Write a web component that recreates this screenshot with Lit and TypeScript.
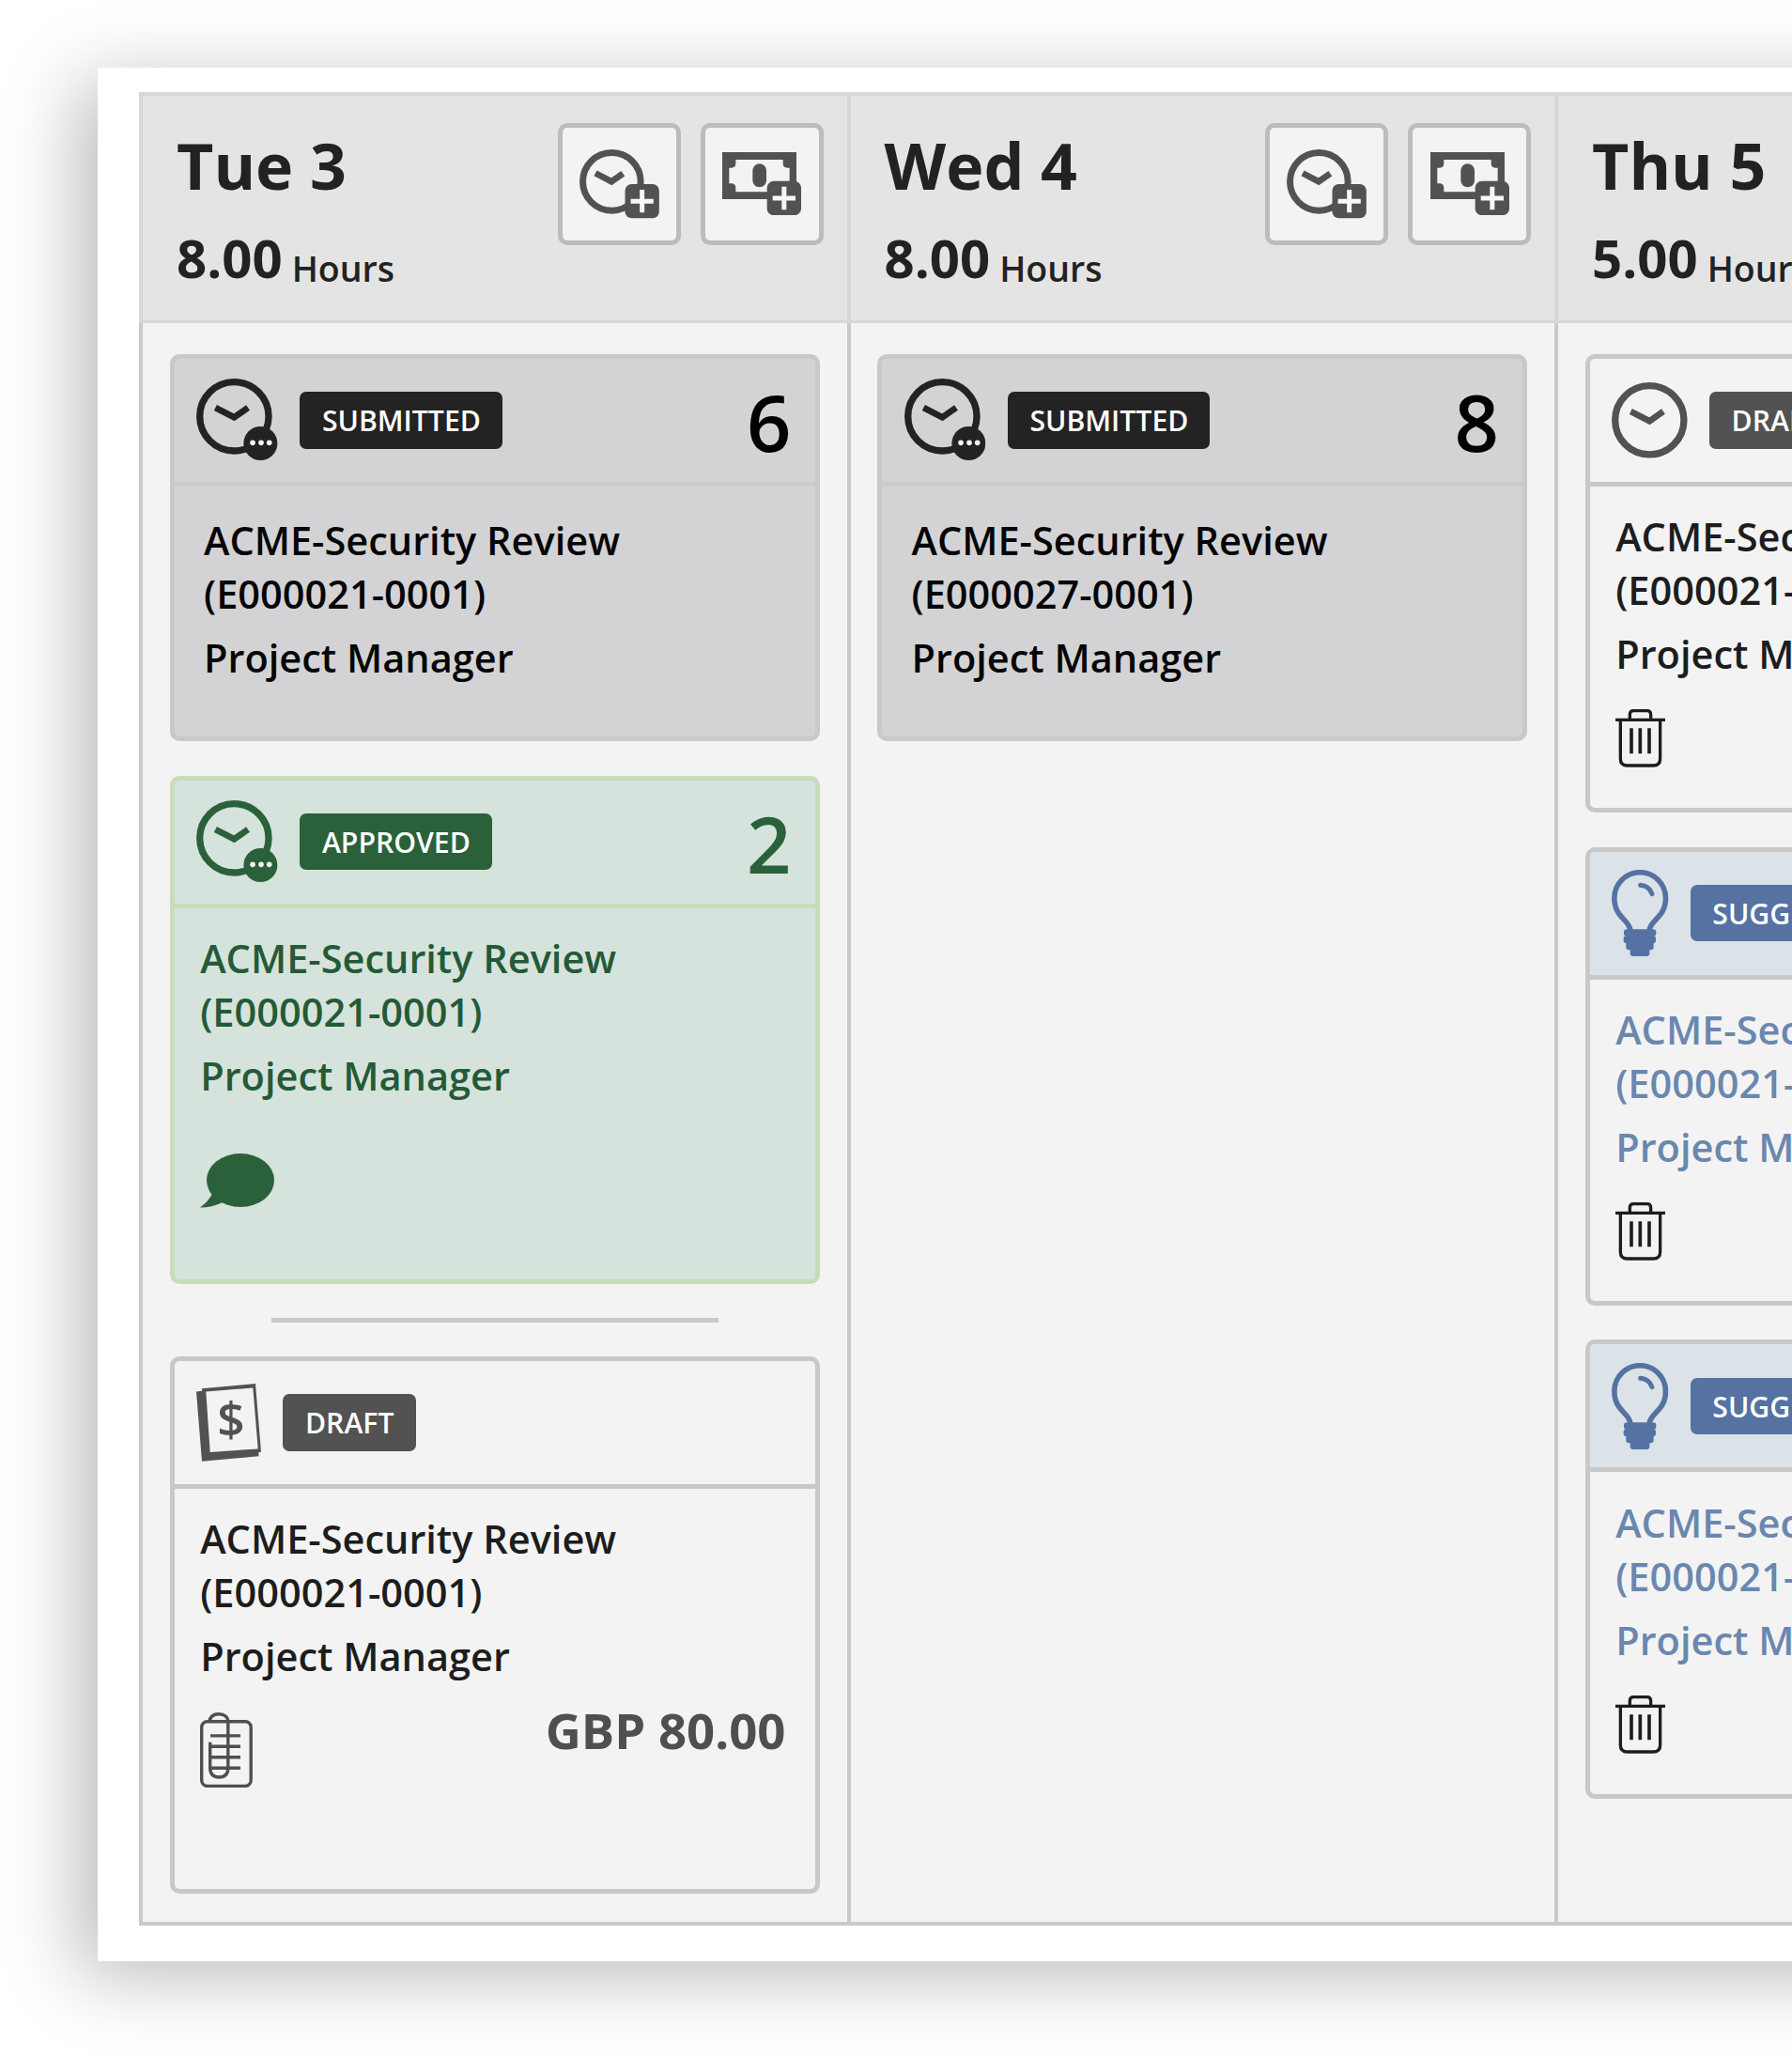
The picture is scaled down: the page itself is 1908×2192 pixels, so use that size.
import { LitElement, html, css, svg, nothing } from "lit";
import { customElement, property } from "lit/decorators.js";

type Status = "submitted" | "approved" | "draft" | "suggested";

interface Entry {
  status: Status;
  kind: "time" | "expense" | "suggestion";
  hours?: string;
  code: string;
  footer?: "comment" | "attachment" | "trash";
  amount?: string;
}

interface Day {
  name: string;
  total: string;
  time: Entry[];
  expenses: Entry[];
}

const DAYS: Day[] = [
  {
    name: "Tue 3",
    total: "8.00",
    time: [
      { status: "submitted", kind: "time", hours: "6", code: "E000021-0001" },
      { status: "approved", kind: "time", hours: "2", code: "E000021-0001", footer: "comment" },
    ],
    expenses: [
      { status: "draft", kind: "expense", code: "E000021-0001", footer: "attachment", amount: "GBP 80.00" },
    ],
  },
  {
    name: "Wed 4",
    total: "8.00",
    time: [{ status: "submitted", kind: "time", hours: "8", code: "E000027-0001" }],
    expenses: [],
  },
  {
    name: "Thu 5",
    total: "5.00",
    time: [
      { status: "draft", kind: "time", code: "E000021-0001", footer: "trash" },
      { status: "suggested", kind: "suggestion", code: "E000021-0001", footer: "trash" },
      { status: "suggested", kind: "suggestion", code: "E000021-0001", footer: "trash" },
    ],
    expenses: [],
  },
];

const plusBadge = (x: number, y: number) => svg`
  <rect x=${x} y=${y} width="109" height="109" rx="21" fill="#525252" />
  <path d="M${x + 18} ${y + 54.5}h73M${x + 54.5} ${y + 18}v73" stroke="#f7f7f7" stroke-width="15" fill="none" />`;

const addTimeIcon = html`<svg width="85" height="73.3" viewBox="171 207 255 220">
  <circle cx="274" cy="310" r="92.5" fill="none" stroke="#525252" stroke-width="21" />
  <path d="M222 283L273 310L310 284" fill="none" stroke="#525252" stroke-width="20" />
  ${plusBadge(316.5, 318)}
</svg>`;

const addExpenseIcon = html`<svg width="84" height="67" viewBox="628 216 252 201">
  <path fill="#525252" fill-rule="evenodd"
    d="M628 216H865V366H628ZM671 240V252Q671 266 657 266H650V316H657Q671 316 671 330V343H822V330Q822 316 836 316H843V266H836Q822 266 822 252V240Z" />
  <rect x="725" y="253" width="44" height="75" rx="22" fill="#525252" />
  ${plusBadge(771, 308.5)}
</svg>`;

const clockIcon = (pending: boolean) => html`<svg
  class=${pending ? "pending" : ""}
  width=${pending ? 86.4 : 80.6} height=${pending ? 87 : 80.6}
  viewBox=${pending ? "118 114 259 261" : "118 114 242 242"}>
  <circle cx="239" cy="235" r="110" fill="none" stroke="currentColor" stroke-width="22" />
  <path d="M179 207L239 238L283 207" fill="none" stroke="currentColor" stroke-width="20" />
  ${pending
    ? svg`<circle cx="323" cy="321" r="54" fill="currentColor" />
        <g fill="#f4f4f4"><circle cx="298" cy="319" r="8.5" /><circle cx="325" cy="319" r="8.5" /><circle cx="351" cy="319" r="8.5" /></g>`
    : nothing}
</svg>`;

const bulbIcon = html`<svg width="60.3" height="92" viewBox="230 1098 181 276">
  <path d="M290 1291C285 1256 238.500 1250 238.500 1188A82 82 0 0 1 402.500 1188C402.500 1250 355 1256 350 1291"
    fill="none" stroke="currentColor" stroke-width="17" />
  <path d="M322 1147Q350 1150 359 1175" fill="none" stroke="currentColor" stroke-width="15" stroke-linecap="round" />
  <g fill="currentColor">
    <rect x="269" y="1288" width="103" height="22" rx="9" />
    <rect x="268" y="1309" width="103" height="24" rx="9" />
    <rect x="276" y="1298" width="88" height="56" rx="9" />
    <rect x="289" y="1340" width="62" height="34" rx="9" />
  </g>
</svg>`;

const receiptIcon = html`<svg width="69" height="83" viewBox="0 0 69 83">
  <path fill="currentColor" fill-rule="evenodd"
    d="M6 5.300L63 0L69 72.700L66.300 73.200L66.500 77.300L6 82.800L0 8.600L6 7.800ZM10.300 8.600L14.700 73L65.700 69.400L60.300 4.500Z" />
  <text x="37" y="56" text-anchor="middle" font-family="Open Sans, sans-serif" font-weight="600" font-size="51.500" fill="currentColor">$</text>
</svg>`;

const commentIcon = html`<svg width="79" height="58" viewBox="0 0 79 58">
  <ellipse cx="43" cy="28.500" rx="36" ry="28.500" fill="currentColor" />
  <path d="M12.500 43.500Q9 51 0 57.500Q13 57.500 24 52L20 38Z" fill="currentColor" />
</svg>`;

const attachmentIcon = html`<svg width="56" height="80" viewBox="0 0 56 80" fill="none" stroke="currentColor" stroke-width="3.400">
  <rect x="1.700" y="9.800" width="52.500" height="68.600" rx="6" />
  <path d="M10 10C10.500 5 14 1.700 20 1.700S29.800 5 29.800 10V59Q29.800 69 20.300 69T10.700 59V31.800" />
  <path d="M11 24.900H43M11 36.300H43M11 47.800H43M11 59.200H43" />
</svg>`;

const trashIcon = html`<svg width="53.3" height="61.7" viewBox="242 585 160 185" fill="none" stroke="currentColor" stroke-width="10">
  <path d="M288 617V602Q288 590 300 590H343Q355 590 355 602V617" />
  <path d="M242 619H402" />
  <path d="M258 622V743Q258 765 280 765H363Q385 765 385 743V622" />
  <path stroke-width="11" d="M293 646V727M321 646V727M350 646V727" />
</svg>`;

@customElement("entry-card")
class EntryCard extends LitElement {
  @property({ attribute: false }) entry!: Entry;

  static styles = css`
    :host { display: block; }
    .card {
      box-sizing: border-box;
      height: 488.500px;
      border: 5px solid #c8c8c8;
      border-radius: 10px;
      background: #f3f3f3;
      color: #1d1d1d;
      overflow: hidden;
    }
    .head {
      box-sizing: border-box;
      height: 136px;
      padding: 0 25px 0 23.800px;
      border-bottom: 5px solid #c8c8c8;
      display: flex;
      align-items: center;
      gap: 23px;
      color: #525252;
    }
    svg { display: block; flex: none; }
    .pending { margin: 0 0.500px 2px 0; }
    .badge {
      height: 60.500px;
      padding: 0 24px 0 23.500px;
      border-radius: 7px;
      background: #525252;
      color: #fff;
      font-size: 30.200px;
      font-weight: 600;
      line-height: 61.500px;
    }
    .submitted .badge, .approved .badge { padding-right: 23px; }
    .hours {
      margin-left: auto;
      padding-top: 3px;
      font-size: 83px;
      font-weight: 600;
      line-height: 120px;
    }
    .body {
      padding: 25.300px 31px 0 27.500px;
      font-size: 41.500px;
      font-weight: 600;
      line-height: 57px;
    }
    .role { margin-top: 11px; }
    .foot {
      display: flex;
      align-items: flex-start;
      justify-content: space-between;
      margin-top: 30.300px;
      color: #1d1d1d;
    }
    .amount {
      margin-top: -11px;
      font-size: 52.700px;
      font-weight: 700;
      line-height: 60px;
      color: #4f4f4f;
    }
    .submitted { height: 412.500px; background: #d3d3d5; border-color: #c9c9c9; color: #050505; }
    .submitted .head { border-color: #cbcbcc; color: #232323; }
    .submitted .badge { background: #232323; }
    .submitted .hours { color: #000; }
    .submitted .body { padding: 29px 28px 0 31.300px; }
    .approved { height: 541px; background: #d5e3dc; border-color: #c6ddbb; color: #245a36; }
    .approved .head { border-color: #c6ddbb; color: #2a613a; }
    .approved .badge { background: #2a613a; }
    .approved .foot { color: #2a613a; margin-top: 54.500px; }
    .suggested { color: #6b87af; }
    .suggested .head { background: #dbe3e9; color: #5572a3; }
    .suggested .badge { background: #5572a3; }
    .expense { height: 571.700px; }
    .expense .foot { color: #4f4f4f; }
  `;

  private icon() {
    const { kind, status } = this.entry;
    if (kind === "expense") return receiptIcon;
    if (kind === "suggestion") return bulbIcon;
    return clockIcon(status !== "draft");
  }

  private footer() {
    const { footer, amount } = this.entry;
    if (!footer) return nothing;
    const icons = { comment: commentIcon, attachment: attachmentIcon, trash: trashIcon };
    return html`<div class="foot">
      ${icons[footer]}
      ${amount ? html`<span class="amount">${amount}</span>` : nothing}
    </div>`;
  }

  render() {
    const e = this.entry;
    return html`<article class="card ${e.status} ${e.kind}">
      <header class="head">
        ${this.icon()}
        <span class="badge">${e.status.toUpperCase()}</span>
        ${e.hours ? html`<span class="hours">${e.hours}</span>` : nothing}
      </header>
      <div class="body">
        <div>ACME-Security Review</div>
        <div>(${e.code})</div>
        <div class="role">Project Manager</div>
        ${this.footer()}
      </div>
    </article>`;
  }
}

@customElement("app-root")
class AppRoot extends LitElement {
  static styles = css`
    :host {
      display: block;
      box-sizing: border-box;
      width: 1908px;
      height: 2192px;
      padding: 72px 0 0 104px;
      overflow: hidden;
      background: #fff;
      font-family: "Open Sans", "Noto Sans", sans-serif;
    }
    .sheet {
      box-sizing: border-box;
      width: 2400px;
      height: 2016px;
      padding: 26px 0 0 44px;
      background: #fff;
      box-shadow: -20px 15px 76px rgba(0, 0, 0, 0.27);
    }
    .week {
      display: grid;
      grid-template-columns: repeat(3, 753.500px);
      height: 1952px;
    }
    .day { display: flex; flex-direction: column; }
    .day-head {
      box-sizing: border-box;
      height: 245.500px;
      padding: 28px 25px 0 36px;
      border: solid #d7d7d7;
      border-width: 4px 0 3px 4px;
      background: #e4e4e4;
      color: #222;
      display: flex;
      justify-content: space-between;
    }
    .name {
      margin-bottom: 3.400px;
      font-size: 68px;
      font-weight: 700;
      line-height: 92.600px;
    }
    .total {
      font-size: 56.300px;
      font-weight: 700;
      line-height: 96px;
    }
    .unit {
      margin-left: 10px;
      font-size: 37.500px;
      font-weight: 600;
      line-height: 1;
      vertical-align: -4px;
    }
    .actions { display: flex; gap: 21.400px; padding-top: 0.600px; }
    .add {
      box-sizing: border-box;
      width: 130.600px;
      height: 130.600px;
      padding: 0;
      border: 5px solid #bcbcbc;
      border-radius: 10px;
      background: #f3f3f3;
      display: flex;
      align-items: center;
      justify-content: center;
    }
    .day-body {
      flex: 1;
      padding: 33.300px 29px 0 28.700px;
      border: solid #c9c9c9;
      border-width: 0 0 4px 4px;
      background: #f3f3f3;
      display: flex;
      flex-direction: column;
      gap: 36.300px;
    }
    .rule {
      width: 476px;
      height: 5px;
      align-self: center;
      background: #c9c9c9;
    }
  `;

  render() {
    return html`<main class="sheet">
      <div class="week">
        ${DAYS.map(
          (d) => html`<section class="day">
            <header class="day-head">
              <div>
                <div class="name">${d.name}</div>
                <div class="total"><span>${d.total}</span><span class="unit">Hours</span></div>
              </div>
              <div class="actions">
                <button class="add" aria-label="Add time">${addTimeIcon}</button>
                <button class="add" aria-label="Add expense">${addExpenseIcon}</button>
              </div>
            </header>
            <div class="day-body">
              ${d.time.map((e) => html`<entry-card .entry=${e}></entry-card>`)}
              ${d.expenses.length ? html`<div class="rule"></div>` : nothing}
              ${d.expenses.map((e) => html`<entry-card .entry=${e}></entry-card>`)}
            </div>
          </section>`
        )}
      </div>
    </main>`;
  }
}
